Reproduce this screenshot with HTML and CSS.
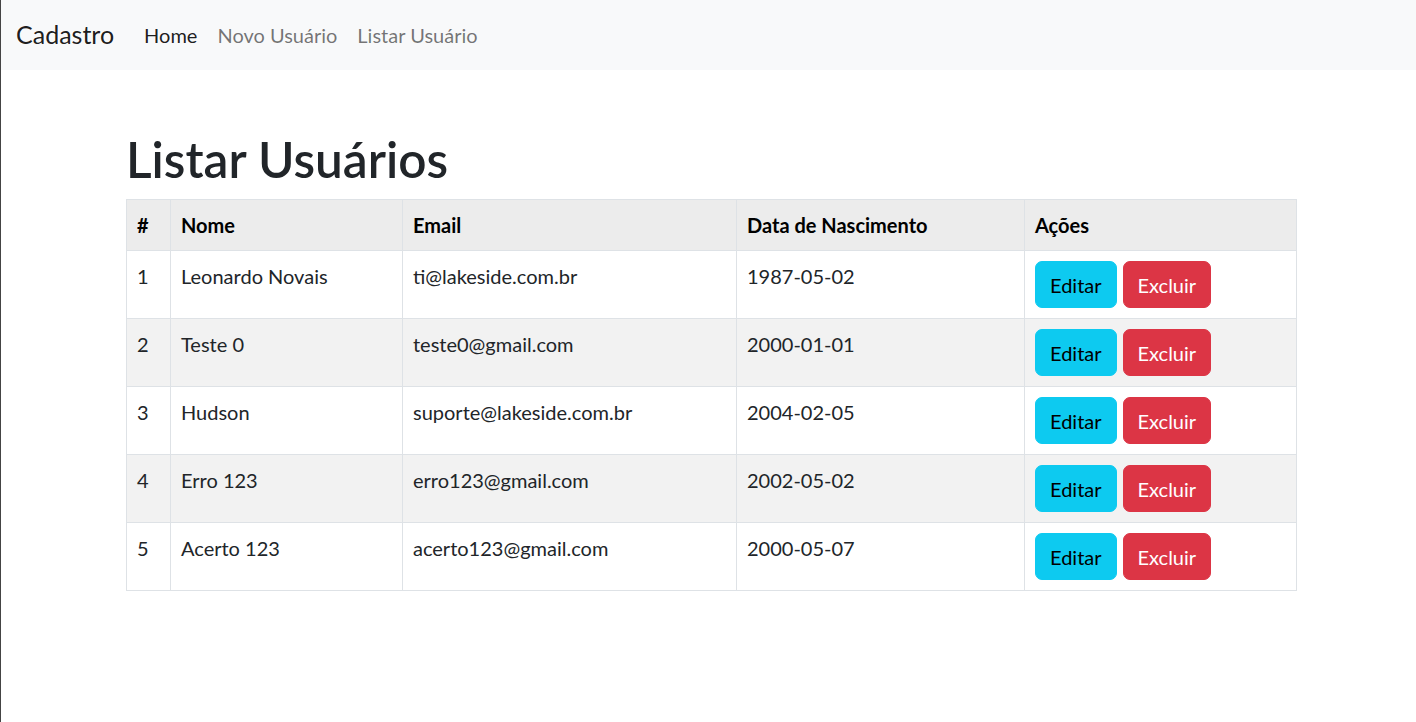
FILE: index.html
```html
<!DOCTYPE html>
<html lang="pt-BR">
<head>
<meta charset="utf-8">
<title>Cadastro</title>
<link rel="stylesheet" href="styles.css">
</head>
<body>
<nav class="navbar">
  <a class="brand" href="#">Cadastro</a>
  <ul class="nav">
    <li><a class="nav-link active" href="#">Home</a></li>
    <li><a class="nav-link" href="#">Novo Usuário</a></li>
    <li><a class="nav-link" href="#">Listar Usuário</a></li>
  </ul>
</nav>
<main class="container">
  <h1 class="title">Listar Usuários</h1>
  <table class="table">
    <colgroup>
      <col class="c-id"><col class="c-nome"><col class="c-email"><col class="c-data"><col class="c-acoes">
    </colgroup>
    <thead>
      <tr><th>#</th><th>Nome</th><th>Email</th><th>Data de Nascimento</th><th>Ações</th></tr>
    </thead>
    <tbody>
      <tr><td>1</td><td>Leonardo Novais</td><td>ti@lakeside.com.br</td><td>1987-05-02</td><td><div class="actions"><button class="btn btn-info">Editar</button><button class="btn btn-danger">Excluir</button></div></td></tr>
      <tr class="striped"><td>2</td><td>Teste 0</td><td>teste0@gmail.com</td><td>2000-01-01</td><td><div class="actions"><button class="btn btn-info">Editar</button><button class="btn btn-danger">Excluir</button></div></td></tr>
      <tr><td>3</td><td>Hudson</td><td>suporte@lakeside.com.br</td><td>2004-02-05</td><td><div class="actions"><button class="btn btn-info">Editar</button><button class="btn btn-danger">Excluir</button></div></td></tr>
      <tr class="striped"><td>4</td><td>Erro 123</td><td>erro123@gmail.com</td><td>2002-05-02</td><td><div class="actions"><button class="btn btn-info">Editar</button><button class="btn btn-danger">Excluir</button></div></td></tr>
      <tr><td>5</td><td>Acerto 123</td><td>acerto123@gmail.com</td><td>2000-05-07</td><td><div class="actions"><button class="btn btn-info">Editar</button><button class="btn btn-danger">Excluir</button></div></td></tr>
    </tbody>
  </table>
</main>
</body>
</html>
```
FILE: styles.css
```css
* { box-sizing: border-box; }
html, body { margin: 0; padding: 0; height: 100%; }
body {
  font-family: "Lato", "Noto Sans", sans-serif;
  font-size: 20px;
  line-height: 1.5;
  color: #212529;
  background: #fff;
  border-left: 1px solid #444;
}
a { text-decoration: none; }
.navbar {
  display: flex;
  align-items: center;
  height: 70px;
  padding: 0 15px;
  background: #f8f9fa;
}
.brand {
  font-size: 25px;
  color: rgba(0,0,0,.9);
  margin-right: 20px;
  line-height: 1.5;
}
.nav { display: flex; list-style: none; margin: 0; padding: 0; }
.nav-link {
  display: block;
  padding: 10px 10px;
  color: rgba(0,0,0,.55);
}
.nav-link.active { color: rgba(0,0,0,.9); }
.container {
  width: 1170px;
  margin-left: 125px;
  padding-top: 60px;
}
.title {
  font-size: 49.5px;
  font-weight: 600;
  line-height: 1.2;
  margin: 0 0 10px;
  color: #212529;
}
.table {
  width: 100%;
  border-collapse: collapse;
  table-layout: fixed;
  color: #212529;
}
.c-id { width: 44px; }
.c-nome { width: 232px; }
.c-email { width: 334px; }
.c-data { width: 288px; }
.c-acoes { width: 272px; }
.table th, .table td {
  border: 1px solid #dee2e6;
  padding: 10px 10px;
  text-align: left;
  vertical-align: top;
}
.table th { font-weight: 700; color: #000; }
.table thead tr { background: #ececec; }
.table tr.striped { background: #f2f2f2; }
.actions { display: flex; gap: 6px; }
.btn {
  font-family: inherit;
  font-size: 20px;
  line-height: 30px;
  height: 47px;
  padding: 7px 14px;
  border: 1px solid transparent;
  border-radius: 7px;
  cursor: pointer;
}
.btn-info { background: #0dcaf0; border-color: #0dcaf0; color: #000; }
.btn-danger { background: #dc3545; border-color: #dc3545; color: #fff; }
```
